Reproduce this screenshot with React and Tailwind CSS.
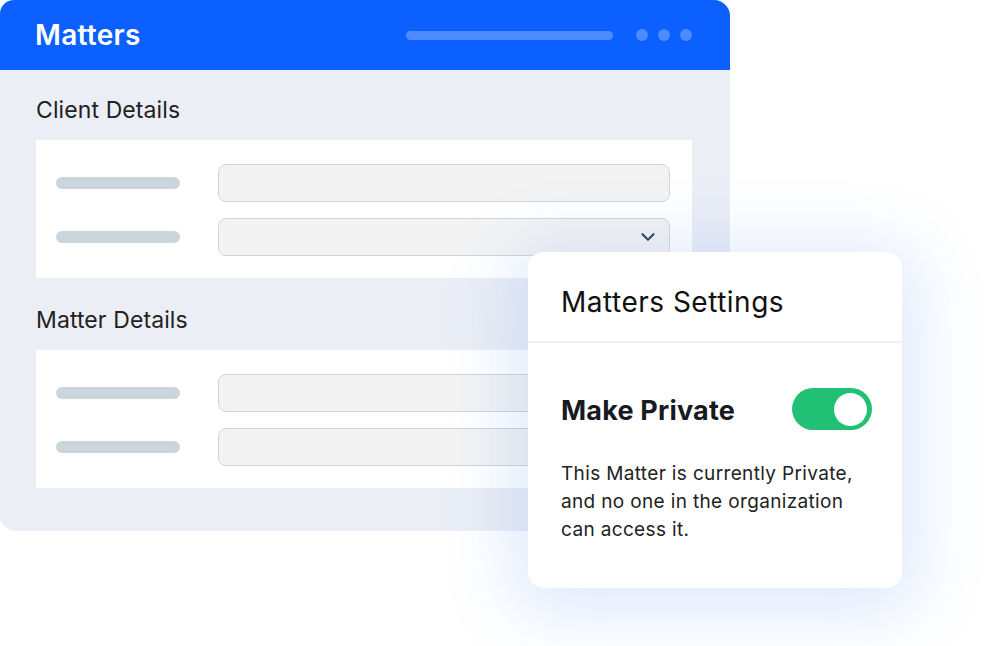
import React from "react";

function Row({ chevron }) {
  return (
    <div className="flex items-center h-[38px]">
      <div className="w-[124px] h-[12px] rounded-full bg-[#cbd5dc] ml-[20px]" />
      <div className="ml-[38px] w-[452px] h-[38px] rounded-[8px] bg-[#f3f3f3] border border-[#cdd6e0] flex items-center justify-end pr-[10px]">
        {chevron && (
          <svg width="22" height="22" viewBox="0 0 24 24" fill="none" stroke="#3f4650" strokeWidth="2.4" strokeLinecap="round" strokeLinejoin="round">
            <path d="M6 9l6 6 6-6" />
          </svg>
        )}
      </div>
    </div>
  );
}

function Card({ chevron }) {
  return (
    <div className="ml-[36px] mr-[38px] bg-white h-[138px] pt-[24px] flex flex-col gap-[16px]">
      <Row />
      <Row chevron={chevron} />
    </div>
  );
}

export default function App() {
  return (
    <div className="relative w-[994px] h-[646px] bg-white overflow-hidden" style={{ fontFamily: "Inter, 'Noto Sans', sans-serif" }}>
      <div className="w-[730px] h-[531px] bg-[#ebeef5] rounded-tl-[14px] rounded-tr-[16px] rounded-bl-[16px] overflow-hidden">
        <div className="h-[70px] bg-[#0b60ff] flex items-center pl-[35px] pr-[38px]">
          <div className="text-white text-[28px] font-semibold leading-none tracking-[0.3px] mt-[-1px]">Matters</div>
          <div className="ml-auto w-[207px] h-[9px] rounded-full bg-[#4d8bff]" />
          <div className="ml-[23px] flex gap-[10px]">
            <div className="w-[12px] h-[12px] rounded-full bg-[#4d8bff]" />
            <div className="w-[12px] h-[12px] rounded-full bg-[#4d8bff]" />
            <div className="w-[12px] h-[12px] rounded-full bg-[#4d8bff]" />
          </div>
        </div>
        <div className="h-[70px] flex items-center pl-[36px] pt-[10px]">
          <div className="text-[23px] leading-none text-[#222] tracking-[0.1px]">Client Details</div>
        </div>
        <Card chevron />
        <div className="h-[72px] flex items-center pl-[36px] pt-[12px]">
          <div className="text-[23px] leading-none text-[#222] tracking-[0.1px]">Matter Details</div>
        </div>
        <Card />
      </div>

      <div className="absolute left-[528px] top-[252px] w-[374px] h-[336px] bg-white rounded-[16px] shadow-[0_10px_70px_16px_rgba(59,130,246,0.17)]">
        <div className="h-[91px] flex items-center pl-[33px] border-b-2 border-[#f0f0f2]">
          <div className="text-[28px] leading-none text-[#111] tracking-[0.5px] mt-[10px]">Matters Settings</div>
        </div>
        <div className="flex items-center justify-between pl-[33px] pr-[30px] mt-[45px]">
          <div className="text-[27px] leading-none font-bold text-[#171a22] tracking-[0.2px] mt-[3px]">Make Private</div>
          <div className="w-[80px] h-[42px] rounded-full bg-[#22c074] flex items-center justify-end pr-[5px]">
            <div className="w-[33px] h-[33px] rounded-full bg-white" />
          </div>
        </div>
        <div className="pl-[33px] pr-[10px] mt-[30px] text-[19px] leading-[28px] text-[#222] tracking-[0.35px] whitespace-nowrap">
          This Matter is currently Private,<br />and no one in the organization<br />can access it.
        </div>
      </div>
    </div>
  );
}
